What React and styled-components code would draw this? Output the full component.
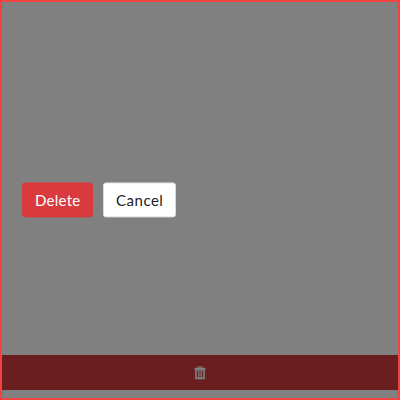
import React from "react";
import styled, { createGlobalStyle } from "styled-components";

const GlobalStyle = createGlobalStyle`
  * { box-sizing: border-box; }
  body { margin: 0; font-family: Lato, sans-serif; }
`;

const Screen = styled.main`
  display: grid;
  grid-template-rows: 353px 35px 8px;
  width: 400px;
  height: 400px;
  border: 2px solid #f44142;
  background: #808080;
  overflow: hidden;
`;

const Dialog = styled.section`
  display: flex;
  align-items: flex-start;
  gap: 10px;
  padding: 180px 20px 0;
`;

const Button = styled.button`
  width: ${({ $danger }) => ($danger ? 71 : 73)}px;
  height: 35px;
  padding: 2px 0 0;
  border: 1px solid ${({ $danger }) => ($danger ? "#d83a3e" : "#dbdbdb")};
  border-radius: 3px;
  background: ${({ $danger }) => ($danger ? "#d83a3e" : "#fff")};
  color: ${({ $danger }) => ($danger ? "#fff" : "#222")};
  font: 400 15px/31px Lato, sans-serif;
  letter-spacing: ${({ $danger }) => ($danger ? 0.25 : 0.5)}px;
  text-indent: 0.5px;
  transform: translateY(0.4px);
`;

const DeleteBar = styled.footer`
  display: flex;
  align-items: center;
  justify-content: center;
  background: #6b1e1f;
  color: #808080;
`;

const TrashIcon = () => (
  <svg width="12" height="14" viewBox="0 0 12 14" fill="none" stroke="currentColor" aria-label="Delete">
    <path d="M4 2V.9h4V2" />
    <path d="M.3 2.5h11.4" strokeWidth="1.3" />
    <path d="M1.9 3.8v8.6h8.2V3.8z" strokeWidth="1.6" strokeLinejoin="round" />
    <path d="M4.4 4.5v7.5M6 4.5v7.5M7.6 4.5v7.5" strokeWidth=".9" />
  </svg>
);

export default function App() {
  return (
    <>
      <GlobalStyle />
      <Screen>
        <Dialog>
          <Button $danger>Delete</Button>
          <Button>Cancel</Button>
        </Dialog>
        <DeleteBar>
          <TrashIcon />
        </DeleteBar>
      </Screen>
    </>
  );
}
